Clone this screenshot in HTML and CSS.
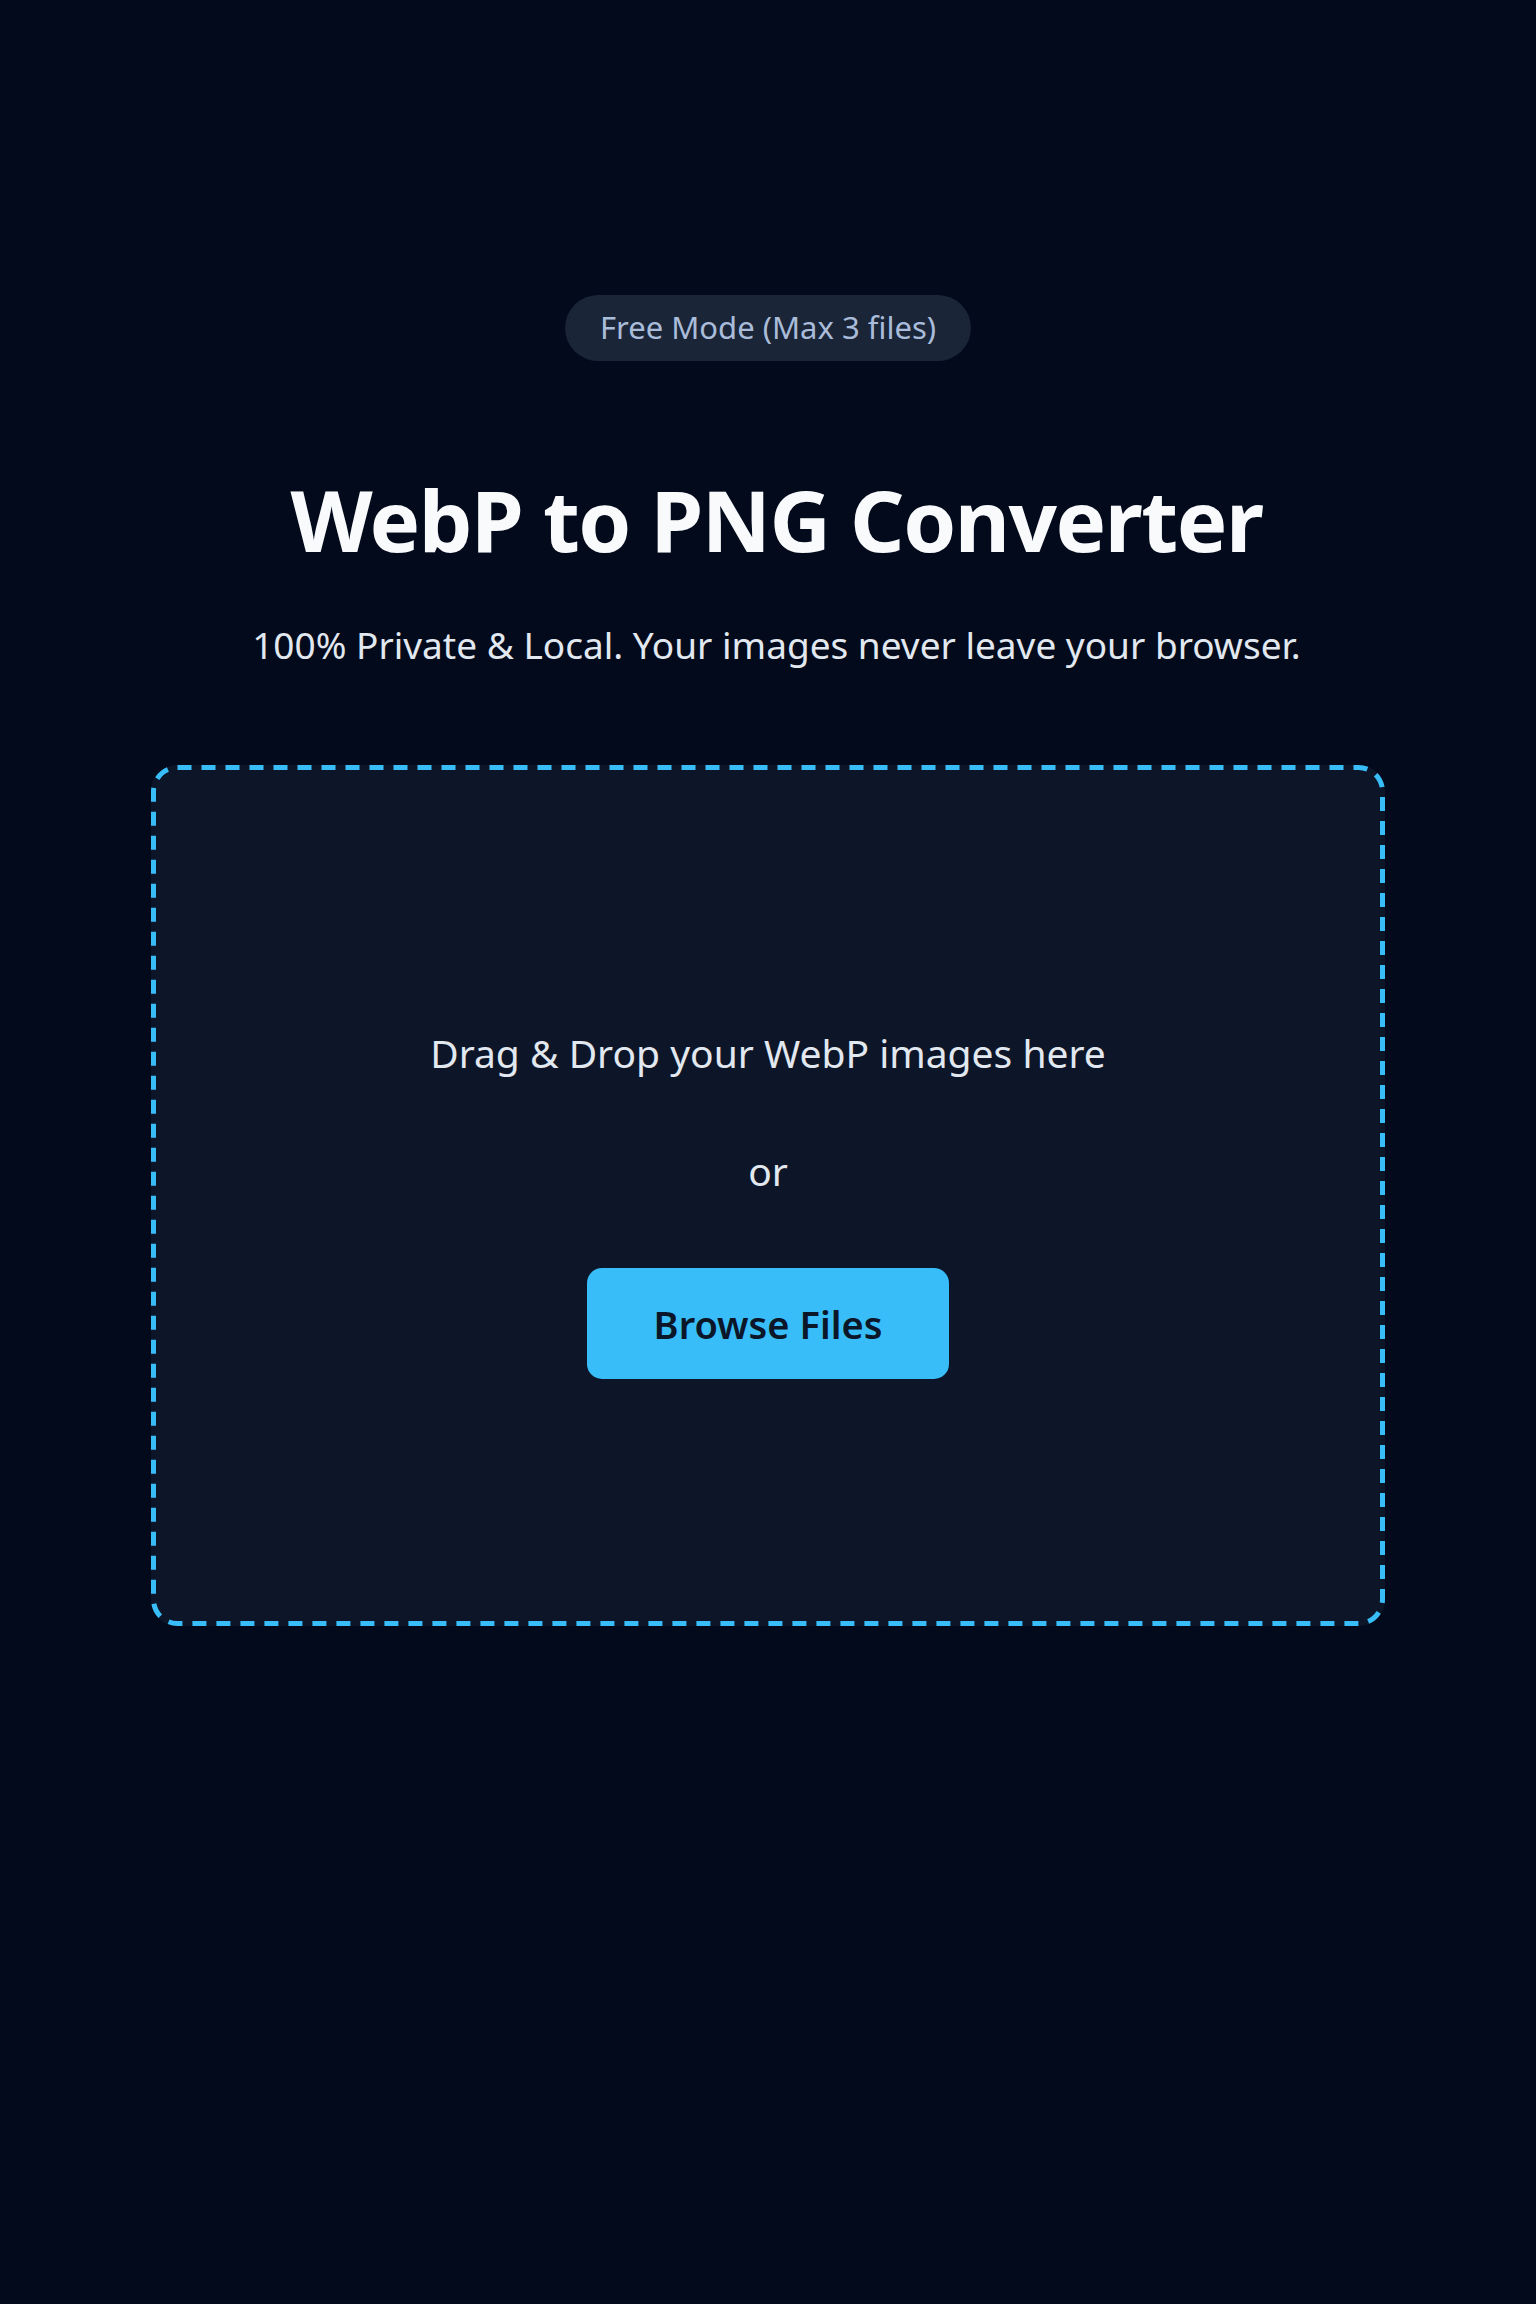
FILE: index.html
```html
<!DOCTYPE html>
<html lang="en">
<head>
<meta charset="utf-8">
<title>WebP to PNG Converter</title>
<link rel="stylesheet" href="styles.css">
</head>
<body>
<main class="page">
  <div class="badge">Free Mode (Max 3 files)</div>
  <header class="hero">
    <h1 class="title">WebP to PNG Converter</h1>
    <p class="subtitle">100% Private &amp; Local. Your images never leave your browser.</p>
  </header>
  <section class="dropzone">
    <svg class="dash" width="1234" height="861" viewBox="0 0 1234 861" aria-hidden="true">
      <rect x="2.5" y="2.5" width="1229" height="856" rx="24" ry="24" fill="none" stroke="#38bdf8" stroke-width="5" stroke-dasharray="14 10"/>
    </svg>
    <p class="drop-text">Drag &amp; Drop your WebP images here</p>
    <p class="or">or</p>
    <button class="browse" type="button">Browse Files</button>
  </section>
</main>
</body>
</html>
```
FILE: styles.css
```css
* { box-sizing: border-box; }
html, body {
  margin: 0;
  padding: 0;
}
body {
  background: #030a1b;
  font-family: "Noto Sans", "Open Sans", "DejaVu Sans", sans-serif;
  color: #f1f5f9;
  min-height: 2304px;
}
.page {
  display: flex;
  flex-direction: column;
  align-items: center;
  padding-top: 295px;
}
.badge {
  font-size: 31px;
  line-height: 1;
  padding: 17px 35px 18px;
  border-radius: 999px;
  background: #1b2538;
  color: #a9bcd9;
}
.hero {
  display: flex;
  flex-direction: column;
  align-items: center;
  padding-left: 17px;
}
.title {
  margin: 107px 0 0;
  font-size: 85px;
  line-height: 1.2;
  font-weight: 700;
  letter-spacing: -1.5px;
  color: #f8fafc;
}
.subtitle {
  margin: 51px 0 0;
  font-size: 37px;
  line-height: 1.3;
  color: #e2e8f0;
}
.dropzone {
  position: relative;
  margin-top: 96px;
  width: 1234px;
  height: 861px;
  border-radius: 26px;
  background: #0d1628;
  display: flex;
  flex-direction: column;
  align-items: center;
  padding-top: 263px;
}
.dash {
  position: absolute;
  top: 0;
  left: 0;
  pointer-events: none;
}
.drop-text {
  margin: 0;
  font-size: 39px;
  line-height: 1.3;
  color: #e2e8f0;
}
.or {
  margin: 67px 0 0;
  font-size: 39px;
  line-height: 1.3;
  color: #e2e8f0;
}
.browse {
  margin-top: 72px;
  width: 362px;
  height: 111px;
  border: none;
  border-radius: 15px;
  background: #38bdf8;
  color: #0b1629;
  font-family: inherit;
  font-size: 38px;
  font-weight: 600;
}
```
